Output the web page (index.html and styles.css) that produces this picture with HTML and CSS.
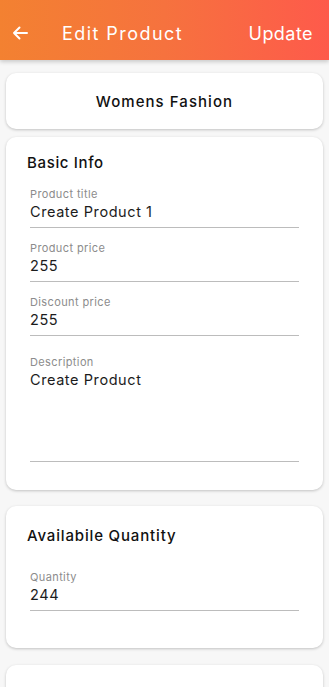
FILE: index.html
```html
<!DOCTYPE html>
<html>
<head>
<meta charset="utf-8">
<link rel="stylesheet" href="styles.css">
</head>
<body>
<header class="appbar">
  <svg class="back" width="16" height="14" viewBox="0 0 16 14"><path d="M15 7H2M7.5 1.5L2 7l5.5 5.5" fill="none" stroke="#fff" stroke-width="2" stroke-linecap="round" stroke-linejoin="round"/></svg>
  <h1 class="title">Edit Product</h1>
  <span class="action">Update</span>
</header>
<main class="content">
  <section class="card card-category">Womens Fashion</section>
  <section class="card card-basic">
    <h2 class="card-title">Basic Info</h2>
    <div class="field">
      <div class="label">Product title</div>
      <div class="value">Create Product 1</div>
    </div>
    <div class="field">
      <div class="label">Product price</div>
      <div class="value">255</div>
    </div>
    <div class="field">
      <div class="label">Discount price</div>
      <div class="value">255</div>
    </div>
    <div class="field field-desc">
      <div class="label">Description</div>
      <div class="value value-multi">Create Product</div>
    </div>
  </section>
  <section class="card card-qty">
    <h2 class="card-title card-title-wide">Availabile Quantity</h2>
    <div class="field field-qty">
      <div class="label">Quantity</div>
      <div class="value">244</div>
    </div>
  </section>
  <section class="card card-next"></section>
</main>
</body>
</html>
```
FILE: styles.css
```css
* { box-sizing: border-box; }
html, body { margin: 0; padding: 0; }
body {
  background: #f7f7f7;
  font-family: "Inter", "DejaVu Sans", sans-serif;
  letter-spacing: 0.04em;
  width: 329px;
  height: 687px;
  overflow: hidden;
}
.appbar {
  height: 60px;
  display: flex;
  align-items: center;
  padding: 6px 16px 0 12px;
  background: linear-gradient(90deg, #f38131 0%, #f6723e 50%, #fe5a4b 100%);
  box-shadow: 0 2px 4px rgba(0,0,0,0.18);
  color: #fff;
  position: relative;
  z-index: 1;
}
.back { display: block; }
.title {
  margin: 0 0 0 34px;
  font-size: 18px;
  font-weight: 400;
  letter-spacing: 0.08em;
  flex: 1;
}
.action { font-size: 18px; letter-spacing: 0.025em; }
.content { padding: 13px 6px 0; }
.card {
  background: #fff;
  border-radius: 10px;
  box-shadow: 0 1px 3px rgba(0,0,0,0.22);
}
.card-category {
  height: 56px;
  display: flex;
  align-items: center;
  justify-content: center;
  font-size: 15px;
  font-weight: 500;
  letter-spacing: 0.07em;
  color: #111;
}
.card-basic { margin-top: 8px; padding: 16px 24px 28px; }
.card-title {
  margin: 0 0 0 -3px;
  font-size: 15px;
  font-weight: 500;
  line-height: 20px;
  letter-spacing: 0.043em;
  color: #111;
}
.card-title-wide { letter-spacing: 0.056em; }
.field { border-bottom: 1.5px solid #bcbcbc; padding-bottom: 5px; margin-top: 13px; }
.card-basic .card-title + .field { margin-top: 14px; }
.label { font-size: 11px; line-height: 14px; color: #8c8c8c; letter-spacing: 0.035em; }
.value { font-size: 14.5px; line-height: 20px; color: #1c1c1c; margin-top: 1px; letter-spacing: 0.04em; }
.field-desc { margin-top: 19px; }
.value-multi { height: 86px; }
.card-qty { margin-top: 16px; padding: 20px 24px 37px; }
.card-qty .field { margin-top: 24px; }
.card-next { margin-top: 17px; height: 80px; }
```
